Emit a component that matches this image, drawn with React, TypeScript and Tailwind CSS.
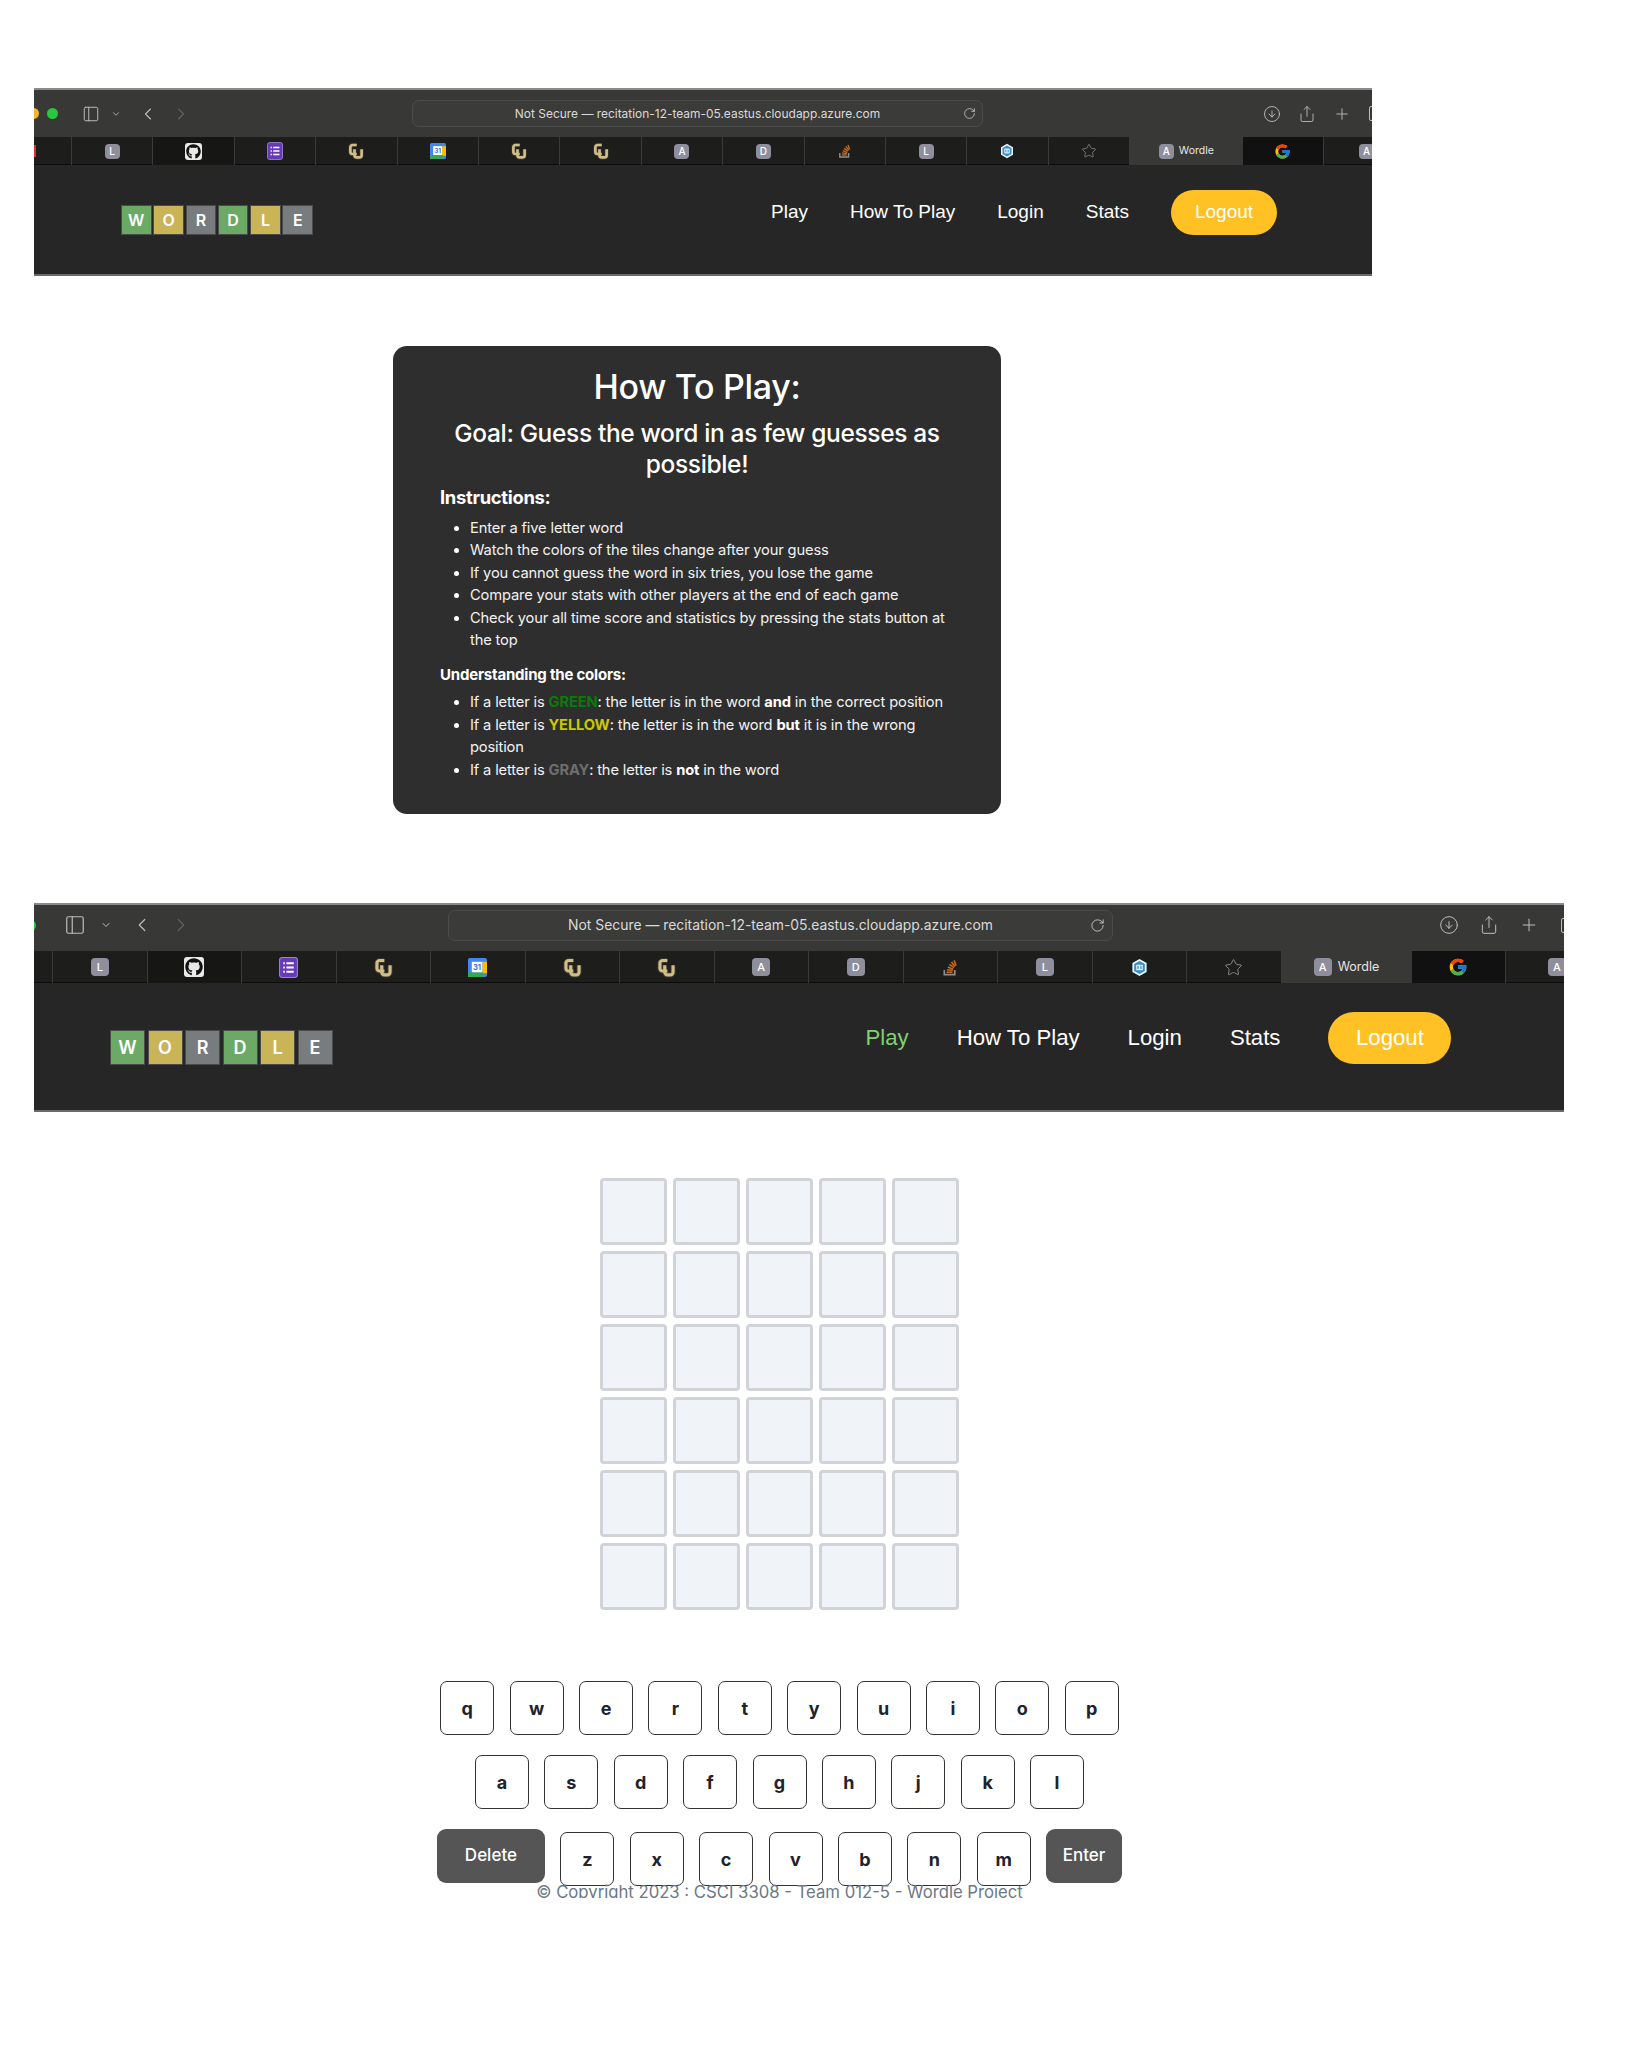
import { ChevronDown, ChevronLeft, ChevronRight, CircleArrowDown, PanelLeft, Plus, RotateCw, Share, Star } from "lucide-react";
import { FaGithub } from "react-icons/fa";
import { FcGoogle } from "react-icons/fc";

const sans = "font-['Inter','Noto_Sans',sans-serif]";

const small = {
  frame: "w-[1338px] h-[188px]",
  toolbar: "h-[49px]",
  dots: "-ml-[6px] gap-[8px] w-[31px]",
  dot: "w-[11px] h-[11px]",
  showYellow: true,
  sidebar: 18,
  sidebarBox: "ml-[23px] w-[18px]",
  chevBox: "ml-[11px] w-[10px]",
  backBox: "ml-[17px] w-[20px]",
  fwdBox: "ml-[13px] w-[20px]",
  address: "ml-[221px] w-[571px] h-[27px] text-[11.95px] pr-[6px]",
  reload: 13,
  rightBox: "ml-[280px] gap-[17px]",
  rightIcon: 18,
  lastBox: "ml-[1px]",
  tabStrip: "h-[28px]",
  firstTab: "w-[38px]",
  tab: "w-[81.4px]",
  activeTab: "w-[112.5px] text-[10.5px] gap-[5px]",
  badge: "w-[15px] h-[15px] text-[10px]",
  icon: 16,
  nav: "h-[111px] pl-[87px]",
  tile: "w-[30.5px] h-[30px] text-[16px]",
  tiles: "mt-[40px] gap-[1.8px]",
  links: "mt-[25px] ml-[458px] gap-[42px] text-[19px]",
  logout: "w-[106px] h-[45px] rounded-[23px]",
};

const large = {
  frame: "w-[1530px] h-[209px]",
  toolbar: "h-[48px] pb-[6px]",
  dots: "-ml-[9px] gap-0 w-[11px]",
  dot: "w-[11px] h-[11px]",
  showYellow: false,
  sidebar: 22,
  sidebarBox: "ml-[28px] w-[22px]",
  chevBox: "ml-[14px] w-[12px]",
  backBox: "ml-[19px] w-[22px]",
  fwdBox: "ml-[17px] w-[22px]",
  address: "ml-[256px] w-[665px] h-[31px] text-[13.9px] pr-[7px]",
  reload: 15,
  rightBox: "ml-[326px] gap-[20px]",
  rightIcon: 20,
  lastBox: "ml-[2px]",
  tabStrip: "h-[32px]",
  firstTab: "w-[19px]",
  tab: "w-[94.5px]",
  activeTab: "w-[130px] text-[12.5px] gap-[6px]",
  badge: "w-[18px] h-[18px] text-[11px]",
  icon: 19,
  nav: "h-[129px] pl-[76px]",
  tile: "w-[35px] h-[35px] text-[18px]",
  tiles: "mt-[47px] gap-[2.5px]",
  links: "mt-[29px] ml-[533px] gap-[48px] text-[22.2px]",
  logout: "w-[123px] h-[52px] rounded-[26px]",
};

type Variant = typeof small;

function LetterBadge({ letter, v }: { letter: string; v: Variant }) {
  return <span className={`flex items-center justify-center rounded-[4px] bg-[#8e8e9c] font-medium text-white ${sans} ${v.badge}`}>{letter}</span>;
}

function CuLogo({ size }: { size: number }) {
  const c = "M13 4H7.5A3 3 0 0 0 4.5 7v6a3 3 0 0 0 3 3H13";
  const u = "M10 9.5v8a3 3 0 0 0 3 3h3.5a3 3 0 0 0 3-3v-8";
  return (
    <svg width={size} height={size} viewBox="0 0 24 24" fill="none">
      <path d={c} stroke="#3a3426" strokeWidth="6" />
      <path d={u} stroke="#3a3426" strokeWidth="6" />
      <path d={c} stroke="#cfbd8a" strokeWidth="3.6" />
      <path d={u} stroke="#cfbd8a" strokeWidth="3.6" />
    </svg>
  );
}

function CalendarIcon({ size }: { size: number }) {
  return (
    <svg width={size} height={size} viewBox="0 0 20 20">
      <rect width="20" height="20" rx="2" fill="#4285f4" />
      <rect x="15" y="4" width="5" height="12" fill="#fbbc04" />
      <rect y="15" width="16" height="5" fill="#34a853" />
      <rect x="4" y="4" width="11" height="11" fill="#fff" />
      <text x="9.5" y="13" textAnchor="middle" fontSize="8" fontWeight="700" fill="#3b6fd8" fontFamily="Inter, sans-serif">31</text>
    </svg>
  );
}

function FormsIcon({ size }: { size: number }) {
  return (
    <svg width={size} height={size + 2} viewBox="0 0 18 20">
      <rect x="0.5" y="0.5" width="17" height="19" rx="2.5" fill="#673ab7" stroke="#9a86c9" />
      <path d="M7 6h7M7 10h7M7 14h7" stroke="#fff" strokeWidth="1.8" />
      <path d="M4 6h1.5M4 10h1.5M4 14h1.5" stroke="#fff" strokeWidth="1.8" />
    </svg>
  );
}

function HexIcon({ size }: { size: number }) {
  return (
    <svg width={size} height={size} viewBox="0 0 20 20">
      <path d="M10 1l7.5 4.2v9.6L10 19l-7.5-4.2V5.2z" fill="#e6f6fc" />
      <path d="M10 3.2l5.6 3.1v7.4L10 16.8l-5.6-3.1V6.300z" fill="#3d8cc4" />
      <rect x="6.500" y="7" width="7" height="6" rx="1" fill="#d8eef8" />
      <path d="M8.500 8.500v3M11.500 8.500v3" stroke="#3d8cc4" strokeWidth="1.200" />
    </svg>
  );
}

function StackIcon({ size }: { size: number }) {
  return (
    <svg width={size} height={size} viewBox="0 0 20 20" fill="none">
      <path d="M3.500 12.500v5h11v-5" stroke="#8d8d8d" strokeWidth="1.800" />
      <g stroke="#c8691f" strokeWidth="1.700">
        <path d="M6 15h6" />
        <path d="M6.300 12.300l6 .9" />
        <path d="M7.200 9.500l5.600 2.400" />
        <path d="M8.800 6.700l4.900 3.500" />
        <path d="M11 4.200l3.700 4.700" />
        <path d="M13.800 2.500l2 5.500" />
      </g>
    </svg>
  );
}

function RedFragment() {
  return <span className="block h-[12px] w-[2px] self-center bg-[#d8322a]" />;
}

function TabIcon({ kind, v }: { kind: string; v: Variant }) {
  if (kind === "github") {
    return (
      <span className="flex items-center justify-center rounded-[3px] bg-[#e9e9e9] p-[1px]">
        <FaGithub size={v.icon - 1} color="#111" />
      </span>
    );
  }
  if (kind === "forms") return <FormsIcon size={v.icon} />;
  if (kind === "cu") return <CuLogo size={v.icon + 2} />;
  if (kind === "calendar") return <CalendarIcon size={v.icon} />;
  if (kind === "so") return <StackIcon size={v.icon} />;
  if (kind === "hex") return <HexIcon size={v.icon} />;
  if (kind === "star") return <Star size={v.icon} color="#8a8a8a" strokeWidth={1.2} />;
  if (kind === "google") return <FcGoogle size={v.icon + 1} />;
  return <LetterBadge letter={kind} v={v} />;
}

const tabsBefore = ["L", "github", "forms", "cu", "calendar", "cu", "cu", "A", "D", "so", "L", "hex", "star"];

function TabStrip({ v }: { v: Variant }) {
  return (
    <div className={`flex shrink-0 overflow-hidden bg-[#1d1d1c] shadow-[inset_0_-1px_0_#0c0c0c] ${v.tabStrip}`}>
      <div className={`flex shrink-0 justify-start border-r border-[#3a3a39] ${v.firstTab}`}>{v.showYellow && <RedFragment />}</div>
      {tabsBefore.map((kind, i) => (
        <div key={i} className={`flex shrink-0 items-center justify-center border-r border-[#3a3a39] ${kind === "github" ? "bg-[#161615]" : ""} ${v.tab}`}>
          <TabIcon kind={kind} v={v} />
        </div>
      ))}
      <div className={`flex shrink-0 items-center justify-center bg-[#383837] text-[#e6e6e6] ${sans} ${v.activeTab}`}>
        <LetterBadge letter="A" v={v} />
        <span>Wordle</span>
      </div>
      <div className={`flex shrink-0 items-center justify-center border-r border-[#3a3a39] bg-[#111111] ${v.tab}`}>
        <TabIcon kind="google" v={v} />
      </div>
      <div className="flex flex-1 items-center justify-end">
        <span className="-mr-[2px]">
          <LetterBadge letter="A" v={v} />
        </span>
      </div>
    </div>
  );
}

function Toolbar({ v }: { v: Variant }) {
  return (
    <div className={`flex shrink-0 items-center overflow-hidden border-t-2 border-[#8a8a8a] bg-[#383836] text-[#bdbdbb] ${v.toolbar}`}>
      <div className={`flex shrink-0 items-center ${v.dots}`}>
        {v.showYellow && <span className={`shrink-0 rounded-full bg-[#f5b62b] ${v.dot}`} />}
        <span className={`shrink-0 rounded-full bg-[#28c840] ${v.dot}`} />
      </div>
      <div className={`shrink-0 ${v.sidebarBox}`}>
        <PanelLeft size={v.sidebar} strokeWidth={1.3} />
      </div>
      <div className={`flex shrink-0 justify-center ${v.chevBox}`}>
        <ChevronDown size={12} strokeWidth={2} />
      </div>
      <div className={`flex shrink-0 justify-center ${v.backBox}`}>
        <ChevronLeft size={v.sidebar + 4} strokeWidth={1.3} />
      </div>
      <div className={`flex shrink-0 justify-center text-[#626260] ${v.fwdBox}`}>
        <ChevronRight size={v.sidebar + 4} strokeWidth={1.3} />
      </div>
      <div className={`relative flex shrink-0 items-center justify-end rounded-[7px] border border-[#4c4c4a] bg-[#3b3b39] text-[#dadad8] ${sans} ${v.address}`}>
        <span className="absolute inset-0 flex items-center justify-center whitespace-nowrap">Not Secure — recitation-12-team-05.eastus.cloudapp.azure.com</span>
        <RotateCw size={v.reload} strokeWidth={1.3} />
      </div>
      <div className={`flex shrink-0 items-center ${v.rightBox}`}>
        <CircleArrowDown size={v.rightIcon} strokeWidth={1.2} />
        <Share size={v.rightIcon} strokeWidth={1.2} />
        <Plus size={v.rightIcon} strokeWidth={1.2} />
        <span className={`h-[15px] w-[15px] shrink-0 rounded-[2px] border border-[#bdbdbb] ${v.lastBox}`} />
      </div>
    </div>
  );
}

const tiles = [
  { letter: "W", color: "bg-[#6aaa64]" },
  { letter: "O", color: "bg-[#c9b458]" },
  { letter: "R", color: "bg-[#787c7e]" },
  { letter: "D", color: "bg-[#6aaa64]" },
  { letter: "L", color: "bg-[#c9b458]" },
  { letter: "E", color: "bg-[#787c7e]" },
];

function WordleNav({ v, active }: { v: Variant; active?: boolean }) {
  return (
    <div className={`flex flex-1 items-start border-b-2 border-[#6a6a6a] bg-[#262626] ${v.nav}`}>
      <div className={`flex shrink-0 ${v.tiles}`}>
        {tiles.map((t) => (
          <span key={t.letter} className={`flex items-center justify-center border border-[#4b4b4b] font-semibold text-white ${sans} ${t.color} ${v.tile}`}>
            {t.letter}
          </span>
        ))}
      </div>
      <nav className={`flex items-center font-['Liberation_Sans',sans-serif] text-white ${v.links}`}>
        <a className={active ? "text-[#7ed36c]" : ""}>Play</a>
        <a>How To Play</a>
        <a>Login</a>
        <a>Stats</a>
        <a className={`flex items-center justify-center bg-[#ffc124] ${v.logout}`}>Logout</a>
      </nav>
    </div>
  );
}

function BrowserShot({ v, active }: { v: Variant; active?: boolean }) {
  return (
    <div className={`ml-[34px] flex flex-col overflow-hidden ${v.frame}`}>
      <Toolbar v={v} />
      <TabStrip v={v} />
      <WordleNav v={v} active={active} />
    </div>
  );
}

function HowToCard() {
  return (
    <section className={`ml-[393px] mt-[70px] h-[468px] w-[608px] rounded-[14px] bg-[#2e2e2e] px-[47px] pt-[21px] text-white ${sans}`}>
      <h1 className="text-center text-[34px] font-medium leading-[40px] tracking-[-0.3px]">How To Play:</h1>
      <h2 className="mt-[11px] text-center text-[24.5px] font-medium leading-[31px] tracking-[-0.35px]">Goal: Guess the word in as few guesses as possible!</h2>
      <h3 className="mt-[2px] text-[18.4px] font-bold leading-[31px] tracking-[-0.3px]">Instructions:</h3>
      <ul className="ml-[30px] mt-[4px] list-disc text-[14.7px] leading-[22.4px] tracking-[-0.15px] text-[#f2f2f2] marker:text-white">
        <li>Enter a five letter word</li>
        <li>Watch the colors of the tiles change after your guess</li>
        <li>If you cannot guess the word in six tries, you lose the game</li>
        <li>Compare your stats with other players at the end of each game</li>
        <li>Check your all time score and statistics by pressing the stats button at the top</li>
      </ul>
      <h4 className="mt-[12px] text-[15px] font-bold leading-[24px] tracking-[-0.2px]">Understanding the colors:</h4>
      <ul className="ml-[30px] mt-[4px] list-disc text-[14.7px] leading-[22.4px] tracking-[-0.15px] text-[#f2f2f2] marker:text-white">
        <li>
          If a letter is <b className="text-[#0a7a0a]">GREEN</b>: the letter is in the word <b className="text-white">and</b> in the correct position
        </li>
        <li>
          If a letter is <b className="text-[#c9c900]">YELLOW</b>: the letter is in the word <b className="text-white">but</b> it is in the wrong position
        </li>
        <li>
          If a letter is <b className="text-[#6e6e6e]">GRAY</b>: the letter is <b className="text-white">not</b> in the word
        </li>
      </ul>
    </section>
  );
}

function Board() {
  return (
    <div className="-ml-[1px] mt-[66px] grid grid-cols-[repeat(5,67px)] grid-rows-[repeat(6,67px)] gap-[6px]">
      {Array.from({ length: 30 }).map((_, i) => (
        <div key={i} className="rounded-[4px] border-[3px] border-[#d1d3d8] bg-[#f0f3f8]" />
      ))}
    </div>
  );
}

function Key({ label }: { label: string }) {
  return <div className={`flex h-[54px] w-[54px] items-center justify-center rounded-[7px] border-[1.5px] border-[#333333] bg-white text-[18px] font-bold text-[#20222c] ${sans}`}>{label}</div>;
}

function Keyboard() {
  return (
    <div className={`-ml-[1px] mt-[71px] flex flex-col items-center ${sans}`}>
      <div className="flex gap-[15.4px]">
        {"qwertyuiop".split("").map((k) => (
          <Key key={k} label={k} />
        ))}
      </div>
      <div className="mt-[20px] flex gap-[15.4px]">
        {"asdfghjkl".split("").map((k) => (
          <Key key={k} label={k} />
        ))}
      </div>
      <div className="mt-[20px] flex items-start gap-[15.4px]">
        <div className="flex h-[54px] w-[108px] items-center justify-center rounded-[9px] bg-[#555555] text-[17px] font-medium text-white">Delete</div>
        <div className="mt-[3px] flex gap-[15.4px]">
          {"zxcvbnm".split("").map((k) => (
            <Key key={k} label={k} />
          ))}
        </div>
        <div className="flex h-[54px] w-[76px] items-center justify-center rounded-[9px] bg-[#555555] text-[17px] font-medium text-white">Enter</div>
      </div>
      <div className="-mt-[4px] h-[16px] overflow-hidden whitespace-nowrap text-[16.7px] leading-[20px] text-[#6b7885]">© Copyright 2023 : CSCI 3308 - Team 012-5 - Wordle Project</div>
    </div>
  );
}

export default function App() {
  return (
    <div className="min-h-[2071px] w-full overflow-hidden bg-white pt-[88px]">
      <BrowserShot v={small} />
      <HowToCard />
      <div className="mt-[89px]">
        <BrowserShot v={large} active />
      </div>
      <div className="flex w-[1560px] flex-col items-center">
        <Board />
        <Keyboard />
      </div>
    </div>
  );
}
